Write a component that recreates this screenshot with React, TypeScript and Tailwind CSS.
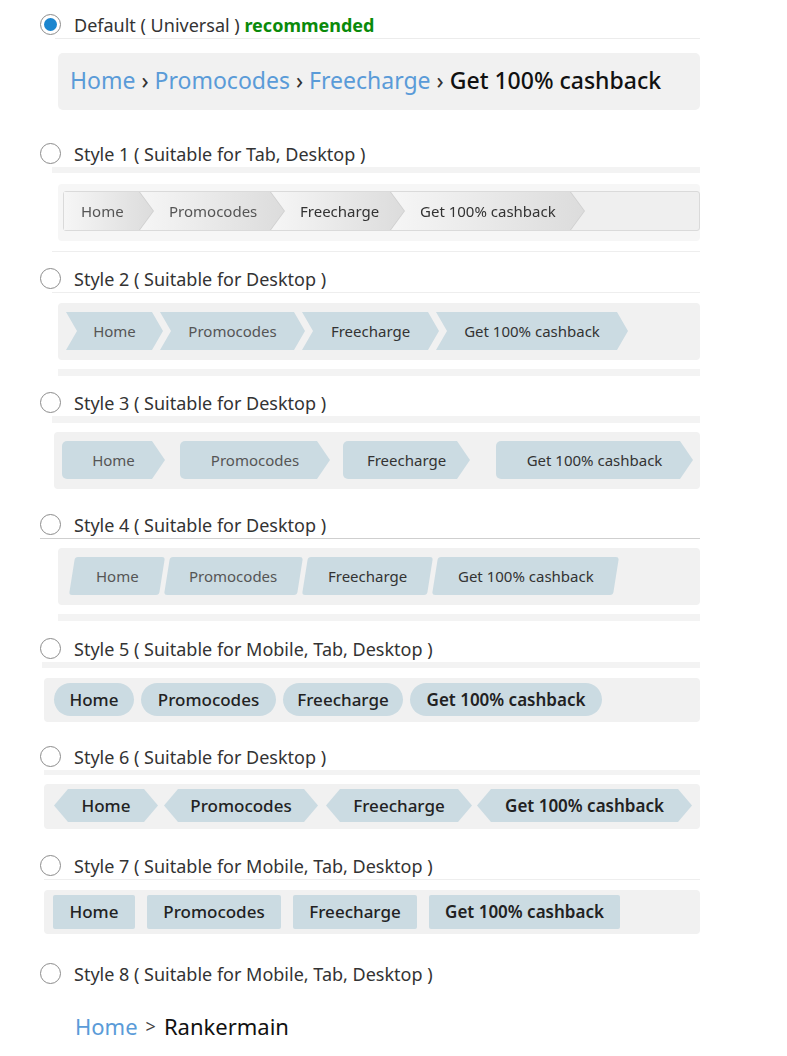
import React from "react"

const ITEMS = ["Home", "Promocodes", "Freecharge", "Get 100% cashback"]
const font = { fontFamily: '"Noto Sans", "Open Sans", sans-serif' }

function Radio({ checked = false }: { checked?: boolean }) {
  return (
    <span className="flex h-[21px] w-[21px] shrink-0 items-center justify-center rounded-full border border-[#8c8c8c] bg-white">
      {checked && <span className="h-[13px] w-[13px] rounded-full bg-[#1c86cf]" />}
    </span>
  )
}

function Label({ text, checked, extra }: { text: string; checked?: boolean; extra?: string }) {
  return (
    <div className="flex h-[27px] items-center gap-[13px]">
      <Radio checked={checked} />
      <span className="text-[18px] leading-none text-[#333]">
        {text}
        {extra && <span className="font-bold text-[#0a8a0a]"> {extra}</span>}
      </span>
    </div>
  )
}

const dark = (i: number) => (i >= 2 ? "text-[#333]" : "text-[#555]")

// Style 1: grey gradient arrows
function Style1() {
  const z = ["z-40", "z-30", "z-20", "z-10"]
  const w = ["w-[89px]", "w-[145px]", "w-[134px]", "w-[194px]"]
  return (
    <div className="ml-[18px] mt-[11px] h-[57px] rounded-[4px] bg-[#f6f6f6] pl-[5px] pt-[7px]">
      <div className="flex h-[40px] items-stretch rounded-[3px] border border-[#dadada] bg-[#efefef]">
        {ITEMS.map((t, i) => (
          <div key={t} className={`relative ${z[i]} ${i > 0 ? "-ml-[14px]" : ""} drop-shadow-[1px_0_0_#cfcfcf]`}>
            <div
              className={`flex h-full ${w[i]} ${i > 0 ? "pl-[30px]" : "pl-[17px]"} items-center bg-gradient-to-r from-[#f6f6f6] to-[#dcdcdc] text-[15px] ${dark(i)} [clip-path:polygon(0_0,calc(100%-14px)_0,100%_50%,calc(100%-14px)_100%,0_100%)]`}
            >
              {t}
            </div>
          </div>
        ))}
      </div>
    </div>
  )
}

// Style 2: chevrons
function Style2() {
  const w = ["w-[97px]", "w-[145px]", "w-[137px]", "w-[192px]"]
  return (
    <div className="ml-[18px] mt-[10px] h-[57px] rounded-[4px] bg-[#f1f1f1] pl-[8px] pt-[9px]">
      <div className="flex h-[38px]">
        {ITEMS.map((t, i) => (
          <div
            key={t}
            className={`flex h-full ${w[i]} ${i > 0 ? "-ml-[3px]" : ""} items-center justify-center bg-[#cbdbe2] text-[15px] ${dark(i)} [clip-path:polygon(0_0,calc(100%-11px)_0,100%_50%,calc(100%-11px)_100%,0_100%,11px_50%)]`}
          >
            {t}
          </div>
        ))}
      </div>
    </div>
  )
}

// Style 3: tags with rounded left side
function Style3() {
  const w = ["w-[103px]", "w-[150px]", "w-[127px]", "w-[197px]"]
  const ml = ["ml-0", "ml-[15px]", "ml-[13px]", "ml-[26px]"]
  return (
    <div className="ml-[14px] mt-[9px] h-[57px] rounded-[4px] bg-[#f1f1f1] pl-[8px] pt-[9px]">
      <div className="flex h-[38px]">
        {ITEMS.map((t, i) => (
          <div
            key={t}
            className={`flex h-full ${w[i]} ${ml[i]} items-center justify-center rounded-l-[5px] bg-[#cbdbe2] text-[15px] ${dark(i)} [clip-path:polygon(0_0,calc(100%-13px)_0,100%_50%,calc(100%-13px)_100%,0_100%)]`}
          >
            {t}
          </div>
        ))}
      </div>
    </div>
  )
}

// Style 4: slanted blocks
function Style4() {
  const w = ["w-[90px]", "w-[133px]", "w-[125px]", "w-[181px]"]
  return (
    <div className="ml-[18px] mt-[9px] h-[57px] rounded-[4px] bg-[#f1f1f1] pl-[14px] pt-[9px]">
      <div className="flex h-[38px] gap-[5px]">
        {ITEMS.map((t, i) => (
          <div
            key={t}
            className={`flex h-full ${w[i]} -skew-x-[9deg] items-center justify-center rounded-[3px] bg-[#cbdbe2]`}
          >
            <span className={`skew-x-[9deg] text-[15px] ${dark(i)}`}>{t}</span>
          </div>
        ))}
      </div>
    </div>
  )
}

// Style 5: pills
function Style5() {
  const w = ["w-[80px]", "w-[135px]", "w-[120px]", "w-[192px]"]
  return (
    <div className="ml-[4px] mt-[10px] h-[44px] rounded-[4px] bg-[#f1f1f1] pl-[10px] pt-[5px]">
      <div className="flex h-[33px] gap-[7px]">
        {ITEMS.map((t, i) => (
          <div
            key={t}
            className={`flex h-full ${w[i]} items-center justify-center rounded-full bg-[#cbdbe2] text-[17px] text-[#222] ${i === 3 ? "font-semibold" : "font-medium"}`}
          >
            {t}
          </div>
        ))}
      </div>
    </div>
  )
}

// Style 6: hexagons
function Style6() {
  const w = ["w-[104px]", "w-[154px]", "w-[146px]", "w-[215px]"]
  const ml = ["ml-0", "ml-[6px]", "ml-[8px]", "ml-[5px]"]
  return (
    <div className="ml-[4px] mt-[9px] h-[45px] rounded-[4px] bg-[#f1f1f1] pl-[10px] pt-[5px]">
      <div className="flex h-[33px]">
        {ITEMS.map((t, i) => (
          <div
            key={t}
            className={`flex h-full ${w[i]} ${ml[i]} items-center justify-center bg-[#cbdbe2] text-[17px] text-[#222] ${i === 3 ? "font-semibold" : "font-medium"} [clip-path:polygon(14px_0,calc(100%-14px)_0,100%_50%,calc(100%-14px)_100%,14px_100%,0_50%)]`}
          >
            {t}
          </div>
        ))}
      </div>
    </div>
  )
}

// Style 7: flat rectangles
function Style7() {
  const w = ["w-[82px]", "w-[134px]", "w-[124px]", "w-[191px]"]
  return (
    <div className="ml-[4px] mt-[10px] h-[44px] rounded-[4px] bg-[#f1f1f1] pl-[9px] pt-[5px]">
      <div className="flex h-[34px] gap-[12px]">
        {ITEMS.map((t, i) => (
          <div
            key={t}
            className={`flex h-full ${w[i]} items-center justify-center rounded-[2px] bg-[#cbdbe2] text-[17px] text-[#222] ${i === 3 ? "font-semibold" : "font-medium"}`}
          >
            {t}
          </div>
        ))}
      </div>
    </div>
  )
}

export default function App() {
  return (
    <div className="min-h-[1056px] bg-white pl-[40px] pr-[87px] pt-[11px]" style={font}>
      {/* Default */}
      <Label text="Default ( Universal )" checked extra="recommended" />
      <div className="ml-[15px] h-px bg-[#ececec]" />
      <div className="ml-[18px] mt-[14px] flex h-[57px] items-center rounded-[5px] bg-[#f1f1f1] pb-[3px] pl-[12px] text-[23px]">
        <span className="text-[#5a9bd8]">Home</span>
        <span className="mx-[6px] text-[#333]">›</span>
        <span className="text-[#5a9bd8]">Promocodes</span>
        <span className="mx-[6px] text-[#333]">›</span>
        <span className="text-[#5a9bd8]">Freecharge</span>
        <span className="mx-[6px] text-[#333]">›</span>
        <span className="font-medium text-[#111]">Get 100% cashback</span>
      </div>

      {/* Style 1 */}
      <div className="mt-[30px]">
        <Label text="Style 1 ( Suitable for Tab, Desktop )" />
      </div>
      <div className="ml-[12px] h-[6px] bg-[#f3f3f3]" />
      <Style1 />
      <div className="ml-[12px] mt-[10px] h-px bg-[#eeeeee]" />

      {/* Style 2 */}
      <div className="mt-[13px]">
        <Label text="Style 2 ( Suitable for Desktop )" />
      </div>
      <div className="ml-[12px] h-px bg-[#eeeeee]" />
      <Style2 />
      <div className="ml-[18px] mt-[9px] h-[7px] bg-[#f3f3f3]" />

      {/* Style 3 */}
      <div className="mt-[13px]">
        <Label text="Style 3 ( Suitable for Desktop )" />
      </div>
      <div className="ml-[12px] h-[7px] bg-[#f3f3f3]" />
      <Style3 />

      {/* Style 4 */}
      <div className="mt-[22px]">
        <Label text="Style 4 ( Suitable for Desktop )" />
      </div>
      <div className="h-px bg-[#cfcfcf]" />
      <Style4 />
      <div className="ml-[18px] mt-[9px] h-[7px] bg-[#f3f3f3]" />

      {/* Style 5 */}
      <div className="mt-[14px]">
        <Label text="Style 5 ( Suitable for Mobile, Tab, Desktop )" />
      </div>
      <div className="ml-[2px] h-[6px] bg-[#f3f3f3]" />
      <Style5 />

      {/* Style 6 */}
      <div className="mt-[21px]">
        <Label text="Style 6 ( Suitable for Desktop )" />
      </div>
      <div className="ml-[4px] h-[5px] bg-[#f3f3f3]" />
      <Style6 />

      {/* Style 7 */}
      <div className="mt-[23px]">
        <Label text="Style 7 ( Suitable for Mobile, Tab, Desktop )" />
      </div>
      <div className="ml-[4px] h-px bg-[#eeeeee]" />
      <Style7 />

      {/* Style 8 */}
      <div className="mt-[26px]">
        <Label text="Style 8 ( Suitable for Mobile, Tab, Desktop )" />
      </div>
      <div className="ml-[35px] mt-[24px] flex h-[30px] items-center text-[22px]">
        <span className="text-[#5a9bd8]">Home</span>
        <span className="mx-[8px] text-[18px] text-[#444]">&gt;</span>
        <span className="text-[#111]">Rankermain</span>
      </div>
    </div>
  )
}
